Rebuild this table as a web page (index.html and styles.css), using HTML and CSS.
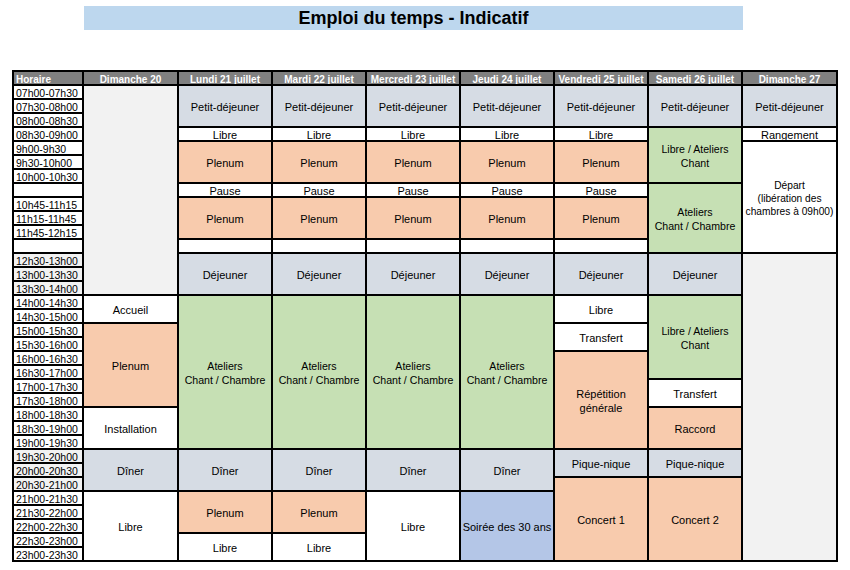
FILE: index.html
```html
<!DOCTYPE html>
<html lang="fr">
<head>
<meta charset="utf-8">
<title>Emploi du temps - Indicatif</title>
<link rel="stylesheet" href="styles.css">
</head>
<body>
<div class="page">
  <div class="title">Emploi du temps - Indicatif</div>
  <div class="sheet">
    <!-- Horaire -->
    <div class="head left">Horaire</div>
    <div class="time">07h00-07h30</div>
    <div class="time">07h30-08h00</div>
    <div class="time">08h00-08h30</div>
    <div class="time">08h30-09h00</div>
    <div class="time">9h00-9h30</div>
    <div class="time">9h30-10h00</div>
    <div class="time">10h00-10h30</div>
    <div class="time"></div>
    <div class="time">10h45-11h15</div>
    <div class="time">11h15-11h45</div>
    <div class="time">11h45-12h15</div>
    <div class="time"></div>
    <div class="time g">12h30-13h00</div>
    <div class="time g">13h00-13h30</div>
    <div class="time g">13h30-14h00</div>
    <div class="time">14h00-14h30</div>
    <div class="time">14h30-15h00</div>
    <div class="time">15h00-15h30</div>
    <div class="time">15h30-16h00</div>
    <div class="time">16h00-16h30</div>
    <div class="time">16h30-17h00</div>
    <div class="time">17h00-17h30</div>
    <div class="time">17h30-18h00</div>
    <div class="time">18h00-18h30</div>
    <div class="time">18h30-19h00</div>
    <div class="time">19h00-19h30</div>
    <div class="time g">19h30-20h00</div>
    <div class="time g">20h00-20h30</div>
    <div class="time g">20h30-21h00</div>
    <div class="time">21h00-21h30</div>
    <div class="time">21h30-22h00</div>
    <div class="time">22h00-22h30</div>
    <div class="time">22h30-23h00</div>
    <div class="time">23h00-23h30</div>

    <!-- Dimanche 20 -->
    <div class="head">Dimanche 20</div>
    <div class="cell empty s15"></div>
    <div class="cell free s2">Accueil</div>
    <div class="cell plen s6">Plenum</div>
    <div class="cell free s3">Installation</div>
    <div class="cell meal s3">Dîner</div>
    <div class="cell free s5">Libre</div>

    <!-- Lundi 21 -->
    <div class="head">Lundi 21 juillet</div>
    <div class="cell meal s3">Petit-déjeuner</div>
    <div class="cell free s1">Libre</div>
    <div class="cell plen s3">Plenum</div>
    <div class="cell free s1">Pause</div>
    <div class="cell plen s3">Plenum</div>
    <div class="cell free s1"></div>
    <div class="cell meal s3">Déjeuner</div>
    <div class="cell green s11">Ateliers<br>Chant / Chambre</div>
    <div class="cell meal s3">Dîner</div>
    <div class="cell plen s3">Plenum</div>
    <div class="cell free s2">Libre</div>

    <!-- Mardi 22 -->
    <div class="head">Mardi 22 juillet</div>
    <div class="cell meal s3">Petit-déjeuner</div>
    <div class="cell free s1">Libre</div>
    <div class="cell plen s3">Plenum</div>
    <div class="cell free s1">Pause</div>
    <div class="cell plen s3">Plenum</div>
    <div class="cell free s1"></div>
    <div class="cell meal s3">Déjeuner</div>
    <div class="cell green s11">Ateliers<br>Chant / Chambre</div>
    <div class="cell meal s3">Dîner</div>
    <div class="cell plen s3">Plenum</div>
    <div class="cell free s2">Libre</div>

    <!-- Mercredi 23 -->
    <div class="head">Mercredi 23 juillet</div>
    <div class="cell meal s3">Petit-déjeuner</div>
    <div class="cell free s1">Libre</div>
    <div class="cell plen s3">Plenum</div>
    <div class="cell free s1">Pause</div>
    <div class="cell plen s3">Plenum</div>
    <div class="cell free s1"></div>
    <div class="cell meal s3">Déjeuner</div>
    <div class="cell green s11">Ateliers<br>Chant / Chambre</div>
    <div class="cell meal s3">Dîner</div>
    <div class="cell free s5">Libre</div>

    <!-- Jeudi 24 -->
    <div class="head">Jeudi 24 juillet</div>
    <div class="cell meal s3">Petit-déjeuner</div>
    <div class="cell free s1">Libre</div>
    <div class="cell plen s3">Plenum</div>
    <div class="cell free s1">Pause</div>
    <div class="cell plen s3">Plenum</div>
    <div class="cell free s1"></div>
    <div class="cell meal s3">Déjeuner</div>
    <div class="cell green s11">Ateliers<br>Chant / Chambre</div>
    <div class="cell meal s3">Dîner</div>
    <div class="cell blue s5">Soirée des 30 ans</div>

    <!-- Vendredi 25 -->
    <div class="head">Vendredi 25 juillet</div>
    <div class="cell meal s3">Petit-déjeuner</div>
    <div class="cell free s1">Libre</div>
    <div class="cell plen s3">Plenum</div>
    <div class="cell free s1">Pause</div>
    <div class="cell plen s3">Plenum</div>
    <div class="cell free s1"></div>
    <div class="cell meal s3">Déjeuner</div>
    <div class="cell free s2">Libre</div>
    <div class="cell free s2">Transfert</div>
    <div class="cell plen s7">Répétition<br>générale</div>
    <div class="cell meal s2">Pique-nique</div>
    <div class="cell plen s6">Concert 1</div>

    <!-- Samedi 26 -->
    <div class="head">Samedi 26 juillet</div>
    <div class="cell meal s3">Petit-déjeuner</div>
    <div class="cell green s4">Libre / Ateliers<br>Chant</div>
    <div class="cell green s5">Ateliers<br>Chant / Chambre</div>
    <div class="cell meal s3">Déjeuner</div>
    <div class="cell green s6">Libre / Ateliers<br>Chant</div>
    <div class="cell free s2">Transfert</div>
    <div class="cell plen s3">Raccord</div>
    <div class="cell meal s2">Pique-nique</div>
    <div class="cell plen s6">Concert 2</div>

    <!-- Dimanche 27 -->
    <div class="head">Dimanche 27</div>
    <div class="cell meal s3">Petit-déjeuner</div>
    <div class="cell free s1">Rangement</div>
    <div class="cell free s8 tight">Départ<br>(libération des<br>chambres à 09h00)</div>
    <div class="cell empty s22"></div>
  </div>
</div>
</body>
</html>
```
FILE: styles.css
```css
* {
  box-sizing: border-box;
}

html, body {
  margin: 0;
  padding: 0;
  background: #ffffff;
}

body {
  font-family: "Liberation Sans", Arial, sans-serif;
  color: #000000;
}

.page {
  width: 850px;
  height: 570px;
  padding: 6px 0 0 12px;
}

.title {
  margin-left: 72px;
  width: 659px;
  height: 24px;
  background: #bdd7ee;
  font-size: 18px;
  font-weight: bold;
  line-height: 24px;
  text-align: center;
  color: #000;
}

.sheet {
  margin-top: 40px;
  width: 826px;
  display: grid;
  grid-auto-flow: column;
  grid-template-columns: 68px 93px 92px 92px 92px 92px 92px 92px 93px;
  grid-template-rows: repeat(35, 12px);
  gap: 2px;
  padding: 2px;
  background: #000000;
}

.head {
  background: #808080;
  color: #ffffff;
  font-size: 10px;
  font-weight: bold;
  line-height: 13px;
  padding-top: 1px;
  text-align: center;
  white-space: nowrap;
  overflow: hidden;
}

.head.left {
  text-align: left;
  padding-left: 2px;
}

.time {
  background: #ffffff;
  font-size: 10.5px;
  line-height: 13px;
  padding-top: 1px;
  padding-left: 2px;
  white-space: nowrap;
  overflow: hidden;
}

.time.g {
  background: #f2f2f2;
}

.cell {
  display: flex;
  align-items: center;
  justify-content: center;
  text-align: center;
  font-size: 11px;
  line-height: 14px;
  padding-top: 2px;
  white-space: nowrap;
  overflow: hidden;
}

.cell.s1 {
  display: block;
  line-height: 13px;
  padding-top: 1px;
}

.cell.green {
  font-size: 10.6px;
}

.cell.tight {
  font-size: 10.2px;
  line-height: 13px;
}

.free { background: #ffffff; }
.empty { background: #f2f2f2; }
.meal { background: #d6dce4; }
.plen { background: #f8cbad; }
.green { background: #c6e0b4; }
.blue { background: #b4c6e7; }

.s1 { grid-row: span 1; }
.s2 { grid-row: span 2; }
.s3 { grid-row: span 3; }
.s4 { grid-row: span 4; }
.s5 { grid-row: span 5; }
.s6 { grid-row: span 6; }
.s7 { grid-row: span 7; }
.s8 { grid-row: span 8; }
.s11 { grid-row: span 11; }
.s15 { grid-row: span 15; }
.s22 { grid-row: span 22; }
```
